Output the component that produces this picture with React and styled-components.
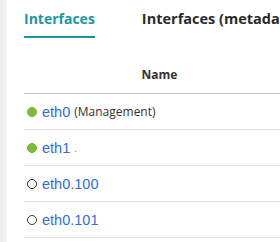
import React from "react";
import styled, { createGlobalStyle } from "styled-components";

const GlobalStyle = createGlobalStyle`
  html, body {
    margin: 0;
    padding: 0;
    background: #fff;
    overflow: hidden;
  }
`;

const interfaces = [
  { name: "eth0", up: true, note: "(Management)" },
  { name: "eth1", up: true, mark: true },
  { name: "eth0.100", up: false },
  { name: "eth0.101", up: false },
];

const App = () => {
  return (
    <Page>
      <GlobalStyle />
      <SideEdge />
      <Content>
        <Tabs>
          <Tab active>Interfaces</Tab>
          <Tab>Interfaces (metadata)</Tab>
        </Tabs>
        <Table>
          <thead>
            <tr>
              <HeadCell>Name</HeadCell>
              <HeadCell>Status</HeadCell>
            </tr>
          </thead>
          <tbody>
            {interfaces.map((item) => (
              <tr key={item.name}>
                <Cell>
                  <NameWrap>
                    <Dot up={item.up} />
                    <Link>{item.name}</Link>
                    {item.note && <Note>{item.note}</Note>}
                    {item.mark && <Mark>.</Mark>}
                  </NameWrap>
                </Cell>
                <Cell />
              </tr>
            ))}
          </tbody>
        </Table>
      </Content>
    </Page>
  );
};

const Page = styled.div`
  display: flex;
  width: 280px;
  height: 242px;
  overflow: hidden;
`;

const SideEdge = styled.div`
  flex: 0 0 7px;
  background: linear-gradient(to right, #ececee, #f4f4f6);
`;

const Content = styled.div`
  flex: 1;
  padding-left: 17px;
  min-width: 0;
`;

const Tabs = styled.div`
  display: flex;
  gap: 47px;
  padding-top: 9px;
  white-space: nowrap;
`;

const Tab = styled.div`
  font-family: "Open Sans", sans-serif;
  font-weight: 700;
  font-size: ${(p) => (p.active ? "14px" : "14.5px")};
  line-height: 20px;
  padding-bottom: 7px;
  color: ${(p) => (p.active ? "#1b97a3" : "#2b2b2b")};
  border-bottom: 2px solid ${(p) => (p.active ? "#14979f" : "transparent")};
`;

const Table = styled.table`
  border-collapse: collapse;
  margin-top: 23px;
  table-layout: fixed;
  width: 500px;
`;

const HeadCell = styled.th`
  width: 271px;
  font-family: "Open Sans", sans-serif;
  font-size: 12px;
  font-weight: 700;
  color: #333;
  text-align: center;
  padding: 3px 0 7px;
  line-height: 22px;
  border-bottom: 1px solid #c9c9c9;
  &:nth-child(2) {
    color: transparent;
  }
`;

const Cell = styled.td`
  height: 35px;
  padding: 0;
  border-bottom: 1px solid #e4e4e4;
  vertical-align: middle;
`;

const NameWrap = styled.div`
  display: flex;
  align-items: center;
  padding-left: 3px;
  white-space: nowrap;
`;

const Dot = styled.span`
  flex: 0 0 10px;
  width: 10px;
  height: 10px;
  box-sizing: border-box;
  border-radius: 50%;
  margin-right: 5px;
  background: ${(p) => (p.up ? "#7dbb35" : "#fff")};
  border: ${(p) => (p.up ? "1px solid #74b02f" : "1.3px solid #3a3a3a")};
`;

const Link = styled.span`
  font-family: "Liberation Sans", Arial, sans-serif;
  font-size: 14.5px;
  color: #2e6cf0;
`;

const Note = styled.span`
  font-family: "Open Sans", sans-serif;
  font-size: 12px;
  color: #333;
  margin-left: 4px;
`;

const Mark = styled.span`
  font-family: "Liberation Sans", Arial, sans-serif;
  font-size: 10px;
  line-height: 10px;
  color: #e05050;
  margin-left: 4px;
  align-self: flex-end;
  margin-bottom: 2px;
`;

export default App;
